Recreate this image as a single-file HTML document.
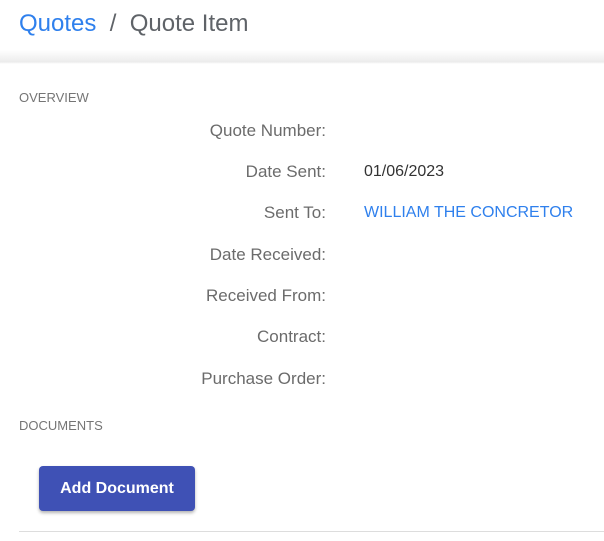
<!DOCTYPE html>
<html><head><style>
body{margin:0;width:604px;height:541px;overflow:hidden;background:#fff;font-family:"Liberation Sans",sans-serif;}
.title{position:absolute;left:19px;top:10px;font-size:24px;color:#5f6368;white-space:nowrap}
.title a{color:#2f80ed}
.shade{position:absolute;left:0;top:50px;width:604px;height:14px;background:linear-gradient(#fff,#ececec 85%,#fff)}
.sec{position:absolute;left:19px;font-size:13px;color:#757575}
.lab{position:absolute;right:278px;font-size:17px;color:#6b6b6b;white-space:nowrap;line-height:20px}
.val{position:absolute;left:364px;font-size:16px;color:#333;line-height:20px;white-space:nowrap}
.btn{position:absolute;left:39px;top:466px;width:156px;height:45px;background:#3f51b5;border-radius:4px;color:#fff;font-weight:bold;font-size:16px;line-height:45px;text-align:center;box-shadow:0 2px 3px rgba(0,0,0,.3)}
.line{position:absolute;left:19px;top:531px;width:590px;height:1px;background:#ddd}
</style></head><body>
<div class="shade"></div>
<div class="title"><a>Quotes</a> &nbsp;/ &nbsp;Quote Item</div>
<div class="sec" style="top:90px">OVERVIEW</div>
<div class="lab" style="top:121px">Quote Number:</div>
<div class="lab" style="top:162px">Date Sent:</div><div class="val" style="top:162px">01/06/2023</div>
<div class="lab" style="top:203px">Sent To:</div><div class="val" style="top:203px;color:#2f80ed">WILLIAM THE CONCRETOR</div>
<div class="lab" style="top:245px">Date Received:</div>
<div class="lab" style="top:286px">Received From:</div>
<div class="lab" style="top:327px">Contract:</div>
<div class="lab" style="top:369px">Purchase Order:</div>
<div class="sec" style="top:418px">DOCUMENTS</div>
<div class="btn">Add Document</div>
<div class="line"></div>
</body></html>
